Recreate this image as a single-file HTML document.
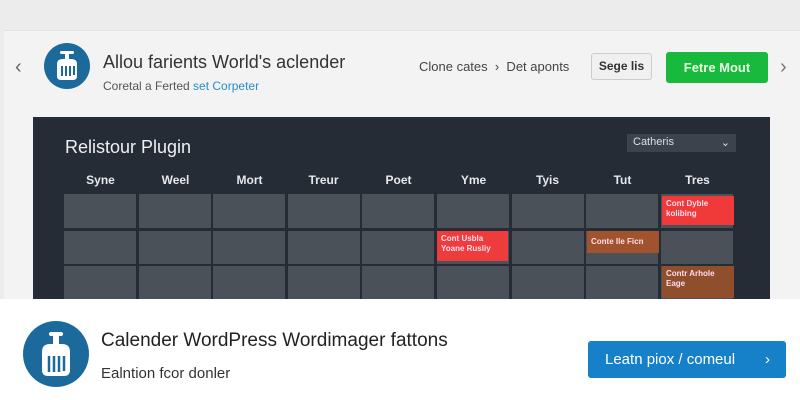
<!DOCTYPE html>
<html><head><style>
*{margin:0;padding:0;box-sizing:border-box}
body{width:800px;height:400px;overflow:hidden;background:#ececec;font-family:"Liberation Sans",sans-serif;position:relative}
.card{position:absolute;left:4px;top:30px;width:796px;height:270px;background:#f3f3f3;border-top:1px solid #e2e2e2}
.abs{position:absolute}
.panel{position:absolute;left:33px;top:117px;width:737px;height:183px;background:#262c36}
.cell{position:absolute;background:#4b5159}
.ev{position:absolute;color:#fde;font-size:8px;line-height:10px;padding:3px 4px;font-weight:bold}
.hd{position:absolute;top:173px;width:75px;text-align:center;color:#e6e8ec;font-size:12px;font-weight:bold}
.bottom{position:absolute;left:0;top:299px;width:800px;height:101px;background:#fff}
</style></head><body>
<div class="card"></div>
<div class="abs" style="left:15px;top:56px;font-size:20px;color:#666">&#8249;</div>
<div class="abs" style="left:780px;top:56px;font-size:20px;color:#777">&#8250;</div>
<svg class="abs" style="left:43px;top:42px" width="48" height="48" viewBox="0 0 48 48"><circle cx="24" cy="24" r="23" fill="#1c6a9c"/><rect x="17" y="9" width="14" height="3" rx="1.5" fill="#fff"/><rect x="22" y="12" width="4" height="5" fill="#fff"/><path d="M14 22 Q14 17 20 17 H28 Q34 17 34 22 V34 Q34 38 30 38 H18 Q14 38 14 34Z" fill="#fff"/><g stroke="#1c6a9c" stroke-width="2"><line x1="19" y1="24" x2="19" y2="34"/><line x1="23" y1="24" x2="23" y2="34"/><line x1="27" y1="24" x2="27" y2="34"/><line x1="31" y1="24" x2="31" y2="33"/></g></svg>
<div class="abs" style="left:103px;top:52px;font-size:18px;color:#333">Allou farients World's aclender</div>
<div class="abs" style="left:103px;top:79px;font-size:12px;color:#555">Coretal a Ferted <span style="color:#2a8cc8">set Corpeter</span></div>
<div class="abs" style="left:419px;top:59px;font-size:13px;color:#444">Clone cates &nbsp;›&nbsp; Det aponts</div>
<div class="abs" style="left:591px;top:53px;width:61px;height:27px;border:1px solid #ccc;border-radius:3px;background:#f0f0f0;font-size:12px;font-weight:bold;color:#333;text-align:center;line-height:25px">Sege lis</div>
<div class="abs" style="left:666px;top:52px;width:102px;height:31px;border-radius:3px;background:#18b93c;font-size:13px;font-weight:bold;color:#e8ffe8;text-align:center;line-height:31px">Fetre Mout</div>
<div class="panel"></div>
<div class="abs" style="left:65px;top:137px;font-size:18px;color:#eef0f3">Relistour Plugin</div>
<div class="abs" style="left:627px;top:134px;width:109px;height:18px;background:#3d434c;color:#dde;font-size:11px;padding:2px 6px">Catheris<span style="float:right">⌄</span></div>
<div class="hd" style="left:63px">Syne</div><div class="hd" style="left:138px">Weel</div><div class="hd" style="left:212px">Mort</div><div class="hd" style="left:286px">Treur</div><div class="hd" style="left:361px">Poet</div><div class="hd" style="left:436px">Yme</div><div class="hd" style="left:510px">Tyis</div><div class="hd" style="left:585px">Tut</div><div class="hd" style="left:660px">Tres</div>
<div id="g"></div>
<script>
var xs=[64,139,213,288,362,437,512,586,661],ys=[194,231,266],hs=[34,33,33],h='';
for(var r=0;r<3;r++)for(var c=0;c<9;c++)h+='<div class="cell" style="left:'+xs[c]+'px;top:'+ys[r]+'px;width:72px;height:'+hs[r]+'px"></div>';
document.getElementById('g').innerHTML=h;
</script>
<div class="ev" style="left:662px;top:196px;width:72px;height:29px;background:#f03a3a">Cont Dyble<br>kolibing</div>
<div class="ev" style="left:437px;top:231px;width:71px;height:30px;background:#ee3c3c">Cont Usbla<br>Yoane Rusliy</div>
<div class="ev" style="left:587px;top:231px;width:72px;height:22px;background:#a0532c;padding-top:6px">Conte Ile Ficn</div>
<div class="ev" style="left:662px;top:266px;width:72px;height:32px;background:#8f4f2c">Contr Arhole<br>Eage</div>
<div class="bottom"></div>
<svg class="abs" style="left:22px;top:320px" width="68" height="68" viewBox="0 0 68 68"><circle cx="34" cy="34" r="33" fill="#1c6a9c"/><rect x="27" y="12" width="14" height="4" rx="2" fill="#fff"/><rect x="31" y="16" width="6" height="8" fill="#fff"/><path d="M20 32 Q20 24 28 24 H40 Q48 24 48 32 V50 Q48 56 42 56 H26 Q20 56 20 50Z" fill="#fff"/><g stroke="#1c6a9c" stroke-width="2.5"><line x1="27" y1="36" x2="27" y2="52"/><line x1="32" y1="36" x2="32" y2="52"/><line x1="37" y1="36" x2="37" y2="52"/><line x1="42" y1="36" x2="42" y2="51"/></g></svg>
<div class="abs" style="left:101px;top:330px;font-size:19px;color:#222">Calender WordPress Wordimager fattons</div>
<div class="abs" style="left:101px;top:365px;font-size:15px;color:#333">Ealntion fcor donler</div>
<div class="abs" style="left:588px;top:341px;width:198px;height:37px;border-radius:3px;background:#1680c8;color:#fff;font-size:15px;line-height:37px;padding-left:17px">Leatn piox / comeul <span style="position:absolute;right:16px">›</span></div>
</body></html>
